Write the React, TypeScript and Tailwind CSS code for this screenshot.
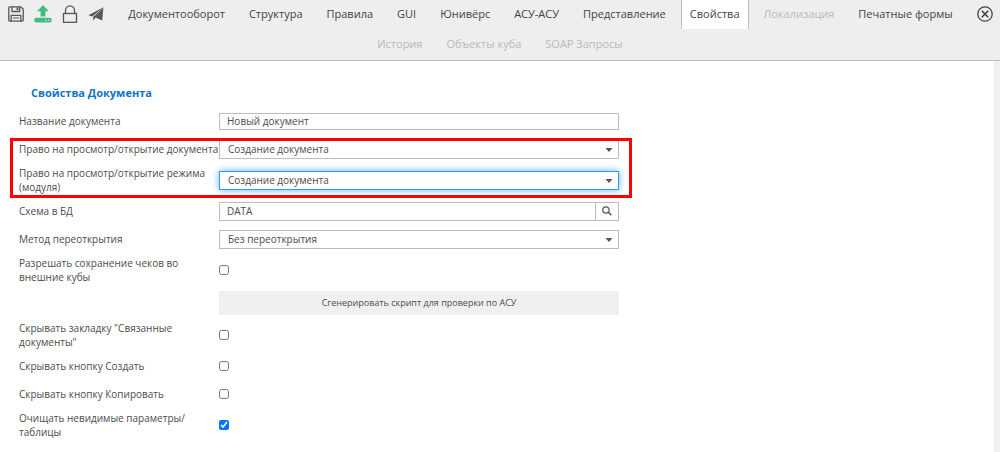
import React from "react";

type Tab = { title: string; active?: boolean; disabled?: boolean };

const mainTabs: Tab[] = [
  { title: "Документооборот" },
  { title: "Структура" },
  { title: "Правила" },
  { title: "GUI" },
  { title: "Юнивёрс" },
  { title: "АСУ-АСУ" },
  { title: "Представление" },
  { title: "Свойства", active: true },
  { title: "Локализация", disabled: true },
  { title: "Печатные формы" },
];

const subTabs: Tab[] = [
  { title: "История", disabled: true },
  { title: "Объекты куба", disabled: true },
  { title: "SOAP Запросы", disabled: true },
];

function TabButton({ title, active, disabled }: Tab) {
  const look = active
    ? "border-[#bdbdbd] bg-white text-[#444]"
    : disabled
      ? "border-transparent text-[#b9b9b9]"
      : "border-transparent text-[#444]";
  return (
    <button type="button" disabled={disabled} className={`h-full border-x px-2 pb-px whitespace-nowrap ${look}`}>
      {title}
    </button>
  );
}

function SaveIcon() {
  return (
    <svg viewBox="0 0 16 16" className="size-4" fill="none" stroke="#555" strokeWidth="1.3">
      <path d="M1.8.8h10.9l2.5 2.3v10.8a1.2 1.2 0 0 1-1.2 1.2H1.8A1 1 0 0 1 .8 14V1.8a1 1 0 0 1 1-1z" />
      <path d="M4 .8v4.7h7.7V.8" />
      <path d="M9.5 1.5v2.6" strokeWidth="1.8" />
      <path d="M3.2 15V9.3h9.6V15" />
      <path d="M5 12h6" strokeWidth="1" />
    </svg>
  );
}

function UploadIcon() {
  return (
    <svg viewBox="0 0 18 18" className="size-[18px]" fill="#42bd7e">
      <path d="M9 0l5.8 6.2h-3.4v5.2H6.6V6.2H3.2z" />
      <rect x="0.3" y="12.8" width="17.4" height="4.8" rx="2" />
      <circle cx="12" cy="15.2" r="0.7" fill="#eee" />
      <circle cx="14.8" cy="15.2" r="0.7" fill="#eee" />
    </svg>
  );
}

function LockIcon() {
  return (
    <svg viewBox="0 0 16 18" className="h-[18px] w-4" fill="none" stroke="#555" strokeWidth="1.3">
      <rect x="1.5" y="8.5" width="13" height="8.8" />
      <path d="M3.5 8.5V5.3a4.5 4.5 0 0 1 9 0v3.2" />
    </svg>
  );
}

function SendIcon() {
  return (
    <svg viewBox="0 0 16 14" className="h-3.5 w-4" fill="#555">
      <path d="M15.4.2L.4 8.3l3.9 1.3z" />
      <path d="M15.4.2L5.2 9.9v3.7l2.1-2.7z" />
      <path d="M15.4.2L7.6 10.6l6.6 2.8z" />
    </svg>
  );
}

function CloseIcon() {
  return (
    <svg viewBox="0 0 16 16" className="size-4" fill="none" stroke="#444" strokeWidth="1.3">
      <circle cx="8" cy="8" r="7.2" />
      <path d="M4.8 4.8l6.4 6.4M11.2 4.8l-6.4 6.4" strokeWidth="1.6" />
    </svg>
  );
}

function SearchIcon() {
  return (
    <svg viewBox="0 0 10 10" className="size-2.5" fill="none" stroke="#555" strokeWidth="1.2">
      <circle cx="4" cy="4" r="3.2" />
      <path d="M6.3 6.3L9.3 9.3" strokeWidth="1.6" />
    </svg>
  );
}

type RowProps = { id: string; label: string; oneLine?: boolean; children: React.ReactNode };

function Row({ id, label, oneLine, children }: RowProps) {
  return (
    <div className="flex min-h-7 items-center py-[3px]">
      <label htmlFor={id} className={`w-[200px] shrink-0 ${oneLine ? "whitespace-nowrap" : "pr-2"}`}>
        {label}
      </label>
      <div className="flex w-[400px] items-center">{children}</div>
    </div>
  );
}

function SelectBox({ id, value, focused }: { id: string; value: string; focused?: boolean }) {
  const look = focused ? "border-[#2d9bf0] shadow-[0_0_7px_#55b0ff]" : "border-[#bdbdbd]";
  return (
    <div className="relative w-full">
      <select id={id} className={`block h-[19px] w-full appearance-none border bg-white px-2 outline-none ${look}`}>
        <option>{value}</option>
      </select>
      <svg viewBox="0 0 8 4" className="pointer-events-none absolute top-2 right-1.5 h-1 w-2" fill="#555">
        <path d="M0.5 0h7L4 4z" />
      </svg>
    </div>
  );
}

function CheckRow({ id, label, checked }: { id: string; label: string; checked?: boolean }) {
  return (
    <Row id={id} label={label}>
      <input id={id} type="checkbox" defaultChecked={checked} className="size-[10px]" />
    </Row>
  );
}

export default function App() {
  return (
    <div className="flex min-h-screen flex-col bg-white font-['Open_Sans','Noto_Sans',sans-serif] text-[10px] leading-[14px] text-[#4c4c4c]">
      <header className="border-b border-[#bdbdbd] bg-[#eee] text-[11px] leading-4">
        <div className="flex h-[29px] items-center">
          <div className="flex h-[27px] shrink-0 items-center gap-2.5 self-start pl-2">
            <button type="button" aria-label="Сохранить"><SaveIcon /></button>
            <button type="button" aria-label="Загрузить"><UploadIcon /></button>
            <button type="button" aria-label="Заблокировать"><LockIcon /></button>
            <button type="button" aria-label="Отправить"><SendIcon /></button>
          </div>
          <nav className="flex h-full min-w-0 flex-1 justify-center gap-1.5">
            {mainTabs.map((t) => <TabButton key={t.title} {...t} />)}
          </nav>
          <div className="flex h-[27px] shrink-0 items-center self-start pr-[7px]">
            <button type="button" aria-label="Закрыть"><CloseIcon /></button>
          </div>
        </div>
        <nav className="flex h-[31px] justify-center gap-1.5">
          {subTabs.map((t) => <TabButton key={t.title} {...t} />)}
        </nav>
      </header>

      <main className="flex-1 border-r-[6px] border-[#f0f0f0] pt-6 pl-[19px]">
        <h1 className="mb-1.5 pl-3 text-[11px] leading-4 font-bold text-[#0f75c8]">Свойства Документа</h1>
        <Row id="name" label="Название документа">
          <input id="name" type="text" defaultValue="Новый документ" className="h-[17px] w-full border border-[#bdbdbd] px-[7px] outline-none" />
        </Row>
        <div className="relative w-[600px]">
          <Row id="doc-right" label="Право на просмотр/открытие документа" oneLine>
            <SelectBox id="doc-right" value="Создание документа" />
          </Row>
          <Row id="mode-right" label="Право на просмотр/открытие режима (модуля)">
            <SelectBox id="mode-right" value="Создание документа" focused />
          </Row>
          <div className="pointer-events-none absolute top-[3px] -right-[13px] -bottom-px -left-[9px] border-[3px] border-[#f00]" />
        </div>
        <Row id="schema" label="Схема в БД">
          <input id="schema" type="text" defaultValue="DATA" className="h-[19px] flex-1 border border-[#bdbdbd] px-[7px] outline-none" />
          <button type="button" aria-label="Найти" className="flex h-[19px] w-[23px] items-center justify-center border border-l-0 border-[#bdbdbd]">
            <SearchIcon />
          </button>
        </Row>
        <Row id="reopen" label="Метод переоткрытия">
          <SelectBox id="reopen" value="Без переоткрытия" />
        </Row>
        <CheckRow id="receipts" label="Разрешать сохранение чеков во внешние кубы" />
        <div className="pt-1 pb-[3px] pl-[200px]">
          <button type="button" className="block h-6 w-[400px] bg-[#f0f0f0] text-[9px]">
            Сгенерировать скрипт для проверки по АСУ
          </button>
        </div>
        <CheckRow id="linked" label={'Скрывать закладку "Связанные документы"'} />
        <CheckRow id="create" label="Скрывать кнопку Создать" />
        <CheckRow id="copy" label="Скрывать кнопку Копировать" />
        <CheckRow id="clear" label="Очищать невидимые параметры/таблицы" checked />
      </main>
    </div>
  );
}
